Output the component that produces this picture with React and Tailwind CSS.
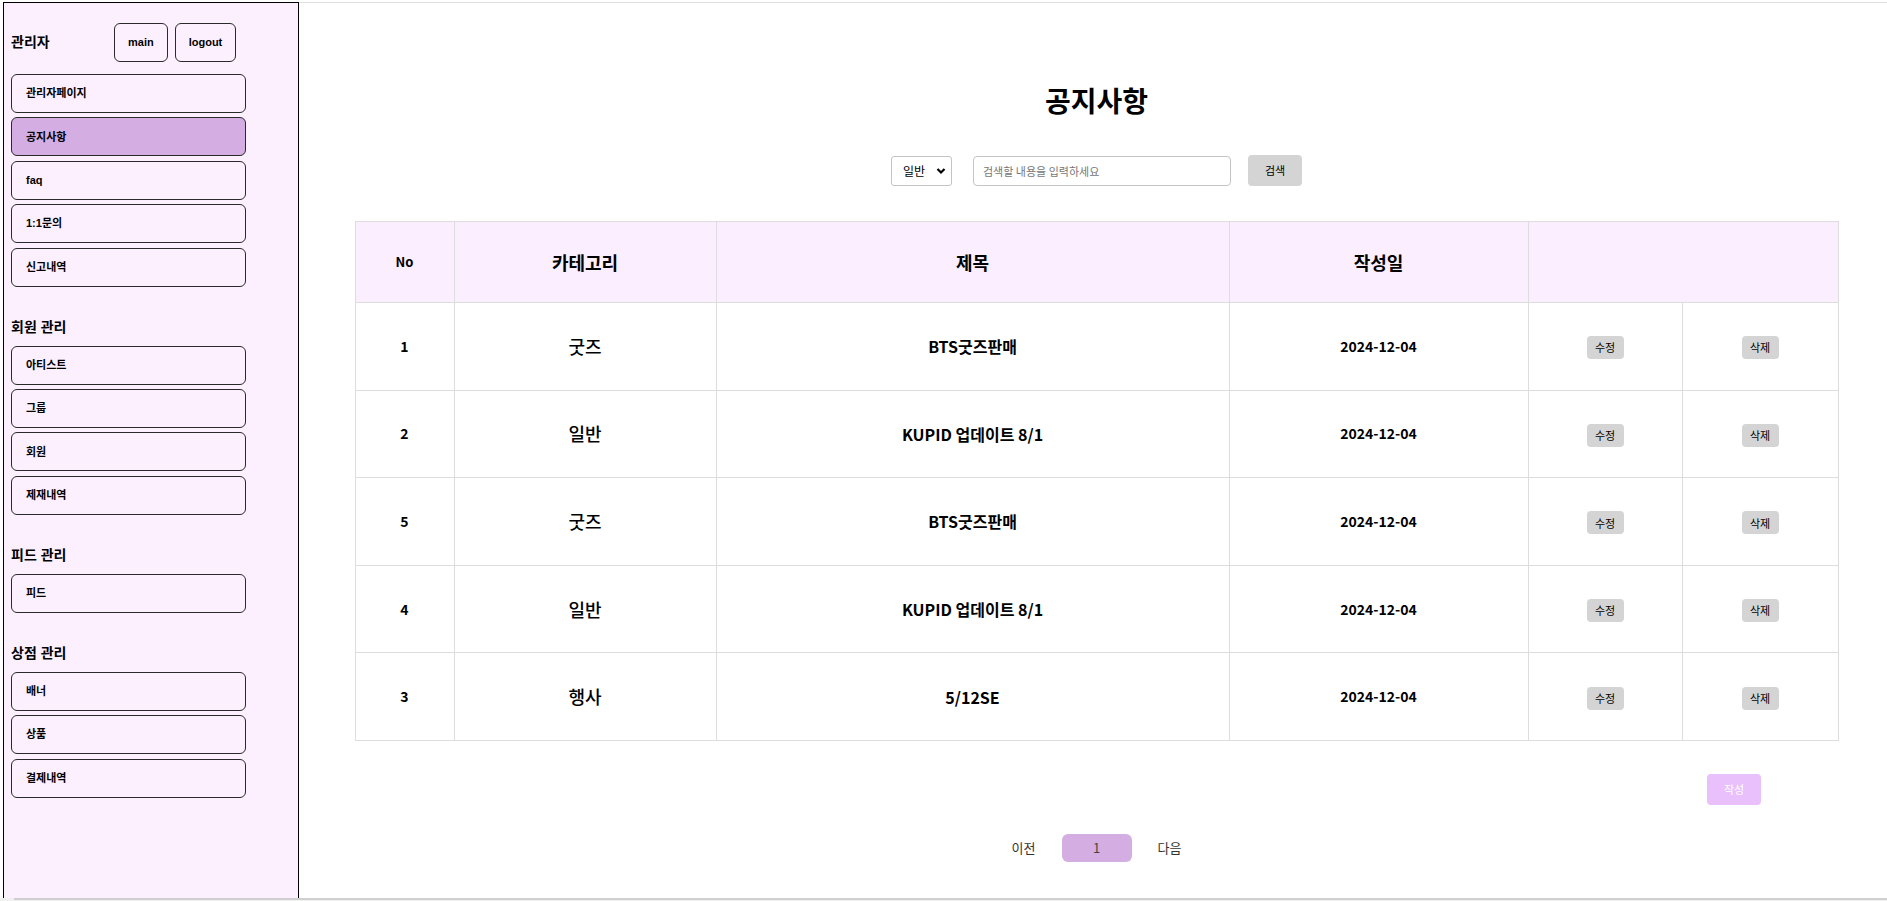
import React from 'react'

const sidebarFont = { fontFamily: '"Liberation Sans", "Noto Sans CJK KR", sans-serif' }
const krFont = { fontFamily: '"Noto Sans CJK KR", "Noto Sans", sans-serif' }

const sections = [
  { title: '회원 관리', items: ['아티스트', '그룹', '회원', '제재내역'] },
  { title: '피드 관리', items: ['피드'] },
  { title: '상점 관리', items: ['배너', '상품', '결제내역'] },
]

const notices = [
  { no: 1, category: '굿즈', title: 'BTS굿즈판매', date: '2024-12-04' },
  { no: 2, category: '일반', title: 'KUPID 업데이트 8/1', date: '2024-12-04' },
  { no: 5, category: '굿즈', title: 'BTS굿즈판매', date: '2024-12-04' },
  { no: 4, category: '일반', title: 'KUPID 업데이트 8/1', date: '2024-12-04' },
  { no: 3, category: '행사', title: '5/12SE', date: '2024-12-04' },
]

const MenuItem = ({ label, active }) => (
  <button
    type="button"
    className={
      'w-[235px] h-[39px] rounded-[6px] border border-[#2a2a2a] pl-[14px] text-left text-[11px] font-bold text-black ' +
      (active ? 'bg-[#d4aee3]' : 'bg-transparent')
    }
  >
    {label}
  </button>
)

const Sidebar = () => (
  <aside
    style={sidebarFont}
    className="w-[296px] shrink-0 h-full border border-b-0 border-black bg-[#fcf0fe] pl-[7px] pt-[20px]"
  >
    <div className="flex items-center h-[39px]">
      <span className="w-[103px] text-[14px] font-bold text-black">관리자</span>
      <div className="flex gap-[7px]">
        <button type="button" className="h-[39px] px-[13px] rounded-[6px] border border-[#2a2a2a] text-[11px] font-bold">
          main
        </button>
        <button type="button" className="h-[39px] px-[13px] rounded-[6px] border border-[#2a2a2a] text-[11px] font-bold">
          logout
        </button>
      </div>
    </div>
    <div className="mt-[12px] flex flex-col gap-[4.4px]">
      <MenuItem label="관리자페이지" />
      <MenuItem label="공지사항" active />
      <MenuItem label="faq" />
      <MenuItem label="1:1문의" />
      <MenuItem label="신고내역" />
    </div>
    {sections.map((s) => (
      <div key={s.title} className="mt-[30px]">
        <h3 className="h-[20px] leading-[20px] text-[14px] font-bold text-black">{s.title}</h3>
        <div className="mt-[9px] flex flex-col gap-[4.4px]">
          {s.items.map((it) => (
            <MenuItem key={it} label={it} />
          ))}
        </div>
      </div>
    ))}
  </aside>
)

const SearchBar = () => (
  <div className="mt-[35px] flex items-center h-[31px]">
    <div className="relative">
      <select
        defaultValue="일반"
        className="appearance-none w-[61px] h-[30px] rounded-[3px] border border-[#c4c4c4] bg-white pl-[11px] text-[12px] text-black"
      >
        <option value="일반">일반</option>
        <option value="굿즈">굿즈</option>
        <option value="행사">행사</option>
      </select>
      <svg className="pointer-events-none absolute right-[6px] top-[11px]" width="10" height="8" viewBox="0 0 10 8">
        <path d="M1.5 2 L5 5.5 L8.5 2" fill="none" stroke="#000" strokeWidth="2.2" />
      </svg>
    </div>
    <input
      type="text"
      placeholder="검색할 내용을 입력하세요"
      className="ml-[21px] w-[258px] h-[30px] rounded-[4px] border border-[#c4c4c4] px-[9px] text-[11px] placeholder:text-[#777] outline-none"
    />
    <button type="button" className="ml-[17px] w-[54px] h-[31px] rounded-[4px] bg-[#d4d4d4] text-[11px] text-black">
      검색
    </button>
  </div>
)

const NoticeTable = () => (
  <table className="mt-[35px] w-[1483px] table-fixed border-collapse text-black" style={krFont}>
    <colgroup>
      <col className="w-[99px]" />
      <col className="w-[262px]" />
      <col className="w-[513px]" />
      <col className="w-[299px]" />
      <col className="w-[154px]" />
      <col className="w-[156px]" />
    </colgroup>
    <thead>
      <tr className="h-[81px] bg-[#fbeefe]">
        <th className="border border-[#dddddd] text-[13px] font-bold">No</th>
        <th className="border border-[#dddddd] text-[18px] font-bold">카테고리</th>
        <th className="border border-[#dddddd] text-[18px] font-bold">제목</th>
        <th className="border border-[#dddddd] text-[18px] font-bold">작성일</th>
        <th colSpan={2} className="border border-[#dddddd]"></th>
      </tr>
    </thead>
    <tbody>
      {notices.map((n) => (
        <tr key={n.no} className="h-[87.6px]">
          <td className="border border-[#dddddd] text-center text-[14px] font-bold">{n.no}</td>
          <td className="border border-[#dddddd] text-center text-[18px] font-medium">{n.category}</td>
          <td className="border border-[#dddddd] text-center text-[16px] font-bold">{n.title}</td>
          <td className="border border-[#dddddd] text-center text-[14px] font-bold">{n.date}</td>
          <td className="border border-[#dddddd] text-center">
            <button type="button" className="w-[37px] h-[23px] rounded-[4px] bg-[#d4d4d4] text-[11px]">
              수정
            </button>
          </td>
          <td className="border border-[#dddddd] text-center">
            <button type="button" className="w-[37px] h-[23px] rounded-[4px] bg-[#d4d4d4] text-[11px]">
              삭제
            </button>
          </td>
        </tr>
      ))}
    </tbody>
  </table>
)

const App = () => {
  return (
    <div className="w-full h-[901px] overflow-hidden bg-white flex flex-col">
      <div className="flex h-[898px] pt-[2px] pl-[3px]">
        <Sidebar />
        <main className="flex-1 border-t border-[#dedede] pl-[56px]" style={krFont}>
          <div className="w-[1483px] flex flex-col items-center">
            <h1 className="mt-[77px] text-[28px] leading-[40px] font-bold text-black">공지사항</h1>
            <SearchBar />
            <NoticeTable />
            <div className="w-full flex justify-end pr-[77px] mt-[33px]">
              <button type="button" className="w-[54px] h-[31px] rounded-[4px] bg-[#e9c0fb] text-[11px] text-white">
                작성
              </button>
            </div>
            <div className="mt-[29px] flex items-center gap-[26px] text-[13px] text-[#333]">
              <span>이전</span>
              <button type="button" className="w-[70px] h-[28px] rounded-[6px] bg-[#d4aee3] text-[13px] text-[#444]">
                1
              </button>
              <span>다음</span>
            </div>
          </div>
        </main>
      </div>
      <div className="h-[3px] bg-[#f0f0f0] pl-[14px]">
        <div className="h-[2px] bg-[#cfcfcf]"></div>
      </div>
    </div>
  )
}

export default App
